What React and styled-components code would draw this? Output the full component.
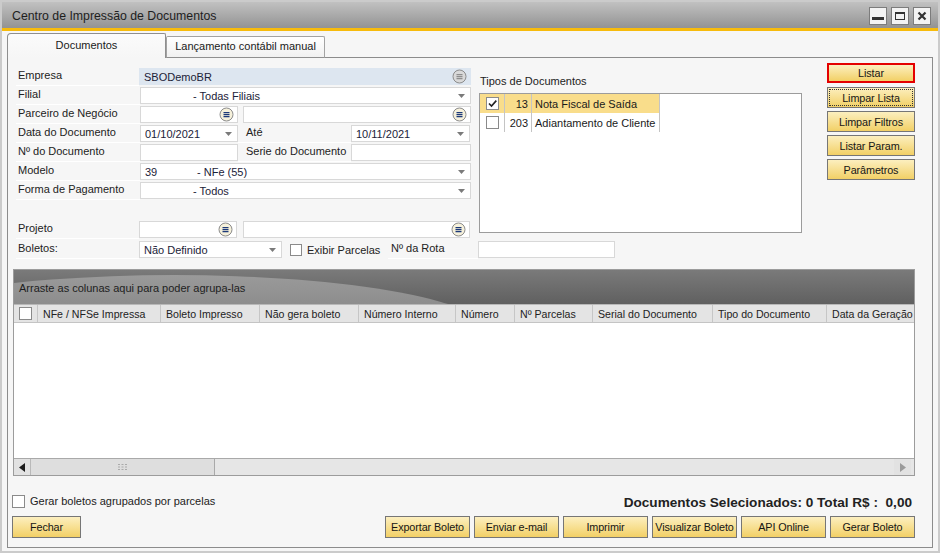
import React from 'react';
import styled, { createGlobalStyle } from 'styled-components';

const GlobalStyle = createGlobalStyle`
  html, body { margin: 0; padding: 0; background: #ffffff; }
  body { font-family: "Liberation Sans", Arial, sans-serif; font-size: 11px; color: #222; }
  * { box-sizing: border-box; }
`;

const Window = styled.div`
  width: 940px;
  height: 553px;
  border: 2px solid #cbcbcb;
  background: #f6f6f6;
  display: flex;
  flex-direction: column;
  overflow: hidden;
`;

const TitleBar = styled.div`
  height: 29px;
  flex-shrink: 0;
  display: flex;
  align-items: center;
  justify-content: space-between;
  padding: 0 7px 0 10px;
  background: linear-gradient(#c1c1c1, #939393);
  border-bottom: 3px solid #f7bb0c;
`;

const Title = styled.div`
  font-size: 12.3px;
  color: #1e1e1e;
  margin-top: 1px;
`;

const WinButtons = styled.div`
  display: flex;
  gap: 4px;
  margin-top: 1px;
`;

const WinButton = styled.div`
  width: 18px;
  height: 18px;
  border: 1px solid #7c7c7c;
  background: #f3f3f3;
  display: flex;
  align-items: center;
  justify-content: center;
`;

const Body = styled.div`
  flex: 1;
  display: flex;
  flex-direction: column;
  padding: 2px 5px 3px 5px;
`;

const TabRow = styled.div`
  height: 25px;
  margin-bottom: -1px;
  display: flex;
  align-items: flex-end;
  position: relative;
  z-index: 1;
`;

const Tab = styled.div`
  width: ${p => p.$w}px;
  height: ${p => (p.$active ? 25 : 22)}px;
  display: flex;
  align-items: center;
  justify-content: center;
  font-size: 11px;
  color: #1a1a1a;
  border: 1px solid ${p => (p.$active ? '#8f8f8f' : '#a3a3a3')};
  border-bottom: ${p => (p.$active ? 'none' : '1px solid #8f8f8f')};
  border-top-left-radius: ${p => (p.$active ? 4 : 2)}px;
  border-top-right-radius: 2px;
  background: ${p => (p.$active ? 'linear-gradient(#fbfbfb, #f6f6f6)' : 'linear-gradient(#ffffff, #f1f1f1)')};
  padding-bottom: ${p => (p.$active ? 3 : 2)}px;
`;

const Panel = styled.div`
  flex: 1;
  border: 1px solid #8c8c8c;
  background: #f6f6f6;
  padding: 5px 17px 0 4px;
  display: flex;
  flex-direction: column;
`;

const TopArea = styled.div`
  display: flex;
  margin-left: 4px;
`;

const FormCol = styled.div`
  width: 455px;
  padding-top: 4px;
  display: flex;
  flex-direction: column;
`;

const Row = styled.div`
  height: 19px;
  display: flex;
  align-items: flex-start;
`;

const Spacer = styled.div`
  height: ${p => p.$h}px;
`;

const Label = styled.div`
  width: ${p => p.$w}px;
  height: 19px;
  flex-shrink: 0;
  padding: 2px 0 0 ${p => p.$pl || 2}px;
  font-size: 11px;
  color: #222;
  white-space: nowrap;
  border-bottom: 1px solid #ffffff;
`;

const Field = styled.div`
  width: ${p => p.$w}px;
  height: 17px;
  margin-top: 1px;
  margin-left: ${p => p.$ml || 0}px;
  flex-shrink: 0;
  display: flex;
  align-items: center;
  padding: 0 3px 0 4px;
  background: ${p => (p.$locked ? '#dde6f0' : '#ffffff')};
  border: 1px solid ${p => (p.$locked ? '#dde6f0' : '#d8d8d8')};
  font-size: 11px;
  color: #1b2238;
`;

const FieldText = styled.span`
  flex: 1;
  white-space: nowrap;
  overflow: hidden;
`;

const Code = styled.span`
  display: inline-block;
  width: ${p => p.$w}px;
`;

const TypesCol = styled.div`
  width: 324px;
  margin-left: 8px;
  display: flex;
  flex-direction: column;
`;

const TypesLabel = styled.div`
  margin-top: 12px;
  height: 18px;
  font-size: 11px;
  color: #222;
  padding-left: 1px;
`;

const TypesBox = styled.div`
  height: 140px;
  border: 1px solid #9c9c9c;
  background: #ffffff;
`;

const TypeRow = styled.div`
  display: flex;
  width: 180px;
  height: 19px;
  background: ${p => (p.$selected ? '#f9dd8b' : 'transparent')};
`;

const TypeCell = styled.div`
  width: ${p => p.$w}px;
  height: 19px;
  display: flex;
  align-items: center;
  justify-content: ${p => p.$align || 'flex-start'};
  padding: 0 ${p => (p.$align === 'flex-end' ? 3 : 0)}px 0 ${p => (p.$align === 'center' ? 0 : 3)}px;
  border-right: 1px solid #c4c4c4;
  font-size: 11px;
  color: #1a1a1a;
`;

const ButtonsCol = styled.div`
  width: 88px;
  margin-left: 25px;
  display: flex;
  flex-direction: column;
  gap: 3px;
`;

const Button = styled.div`
  width: ${p => p.$w || 88}px;
  height: ${p => p.$h || 21}px;
  display: flex;
  align-items: center;
  justify-content: center;
  white-space: nowrap;
  font-size: 10.8px;
  letter-spacing: -0.1px;
  color: #151515;
  background: linear-gradient(#fcefbf, #f2d066);
  border: ${p => (p.$primary ? '2px solid #e40000' : '1px solid #767676')};
  outline: ${p => (p.$focus ? '1px dotted #333' : 'none')};
  outline-offset: -3px;
  margin-bottom: ${p => p.$mb || 0}px;
`;

const BoletoRow = styled.div`
  display: flex;
  align-items: flex-start;
  height: 19px;
  margin: 1px 0 0 4px;
`;

const CheckGroup = styled.div`
  width: 106px;
  height: 19px;
  display: flex;
  align-items: center;
  gap: 5px;
  padding-left: 8px;
  font-size: 11px;
  color: #222;
  white-space: nowrap;
`;

const Box = styled.div`
  width: ${p => p.$s || 13}px;
  height: ${p => p.$s || 13}px;
  flex-shrink: 0;
  border: 1px solid #8a8a8a;
  background: #ffffff;
  display: flex;
  align-items: center;
  justify-content: center;
`;

const Grid = styled.div`
  margin: 10px 0 0 1px;
  height: 207px;
  border: 1px solid #9c9c9c;
  display: flex;
  flex-direction: column;
  background: #ffffff;
`;

const GroupBar = styled.div`
  height: 34px;
  position: relative;
  overflow: hidden;
  background: linear-gradient(#7a7a7a, #606060);
  display: flex;
  align-items: flex-end;
  padding: 0 0 10px 5px;
  font-size: 11px;
  color: #1e1e1e;

  &::before {
    content: '';
    position: absolute;
    left: -160px;
    top: 5px;
    width: 640px;
    height: 120px;
    border-radius: 50%;
    background: linear-gradient(#9a9a9a, #858585 40%);
  }

  span { position: relative; }
`;

const HeaderRow = styled.div`
  height: 19px;
  display: flex;
  background: #e4e4e4;
  border-top: 1px solid #b8b8b8;
  border-bottom: 1px solid #c4c4c4;
  overflow: hidden;
`;

const HeaderCell = styled.div`
  width: ${p => p.$w}px;
  flex-shrink: 0;
  display: flex;
  align-items: center;
  justify-content: ${p => (p.$center ? 'center' : 'flex-start')};
  padding-left: ${p => (p.$center ? 0 : 5)}px;
  border-right: 1px solid #c6c6c6;
  font-size: 10.6px;
  color: #222;
  white-space: nowrap;
`;

const GridBody = styled.div`
  flex: 1;
`;

const ScrollBar = styled.div`
  height: 17px;
  display: flex;
  align-items: stretch;
  background: #e6e6e6;
  border-top: 1px solid #a9a9a9;
`;

const ScrollArrow = styled.div`
  width: 17px;
  display: flex;
  align-items: center;
  justify-content: center;
  background: #e2e2e2;
  border-right: ${p => (p.$left ? '1px solid #b9b9b9' : 'none')};
  margin-left: ${p => (p.$left ? 0 : 'auto')};
  margin-right: ${p => (p.$left ? 0 : 3)}px;
`;

const Thumb = styled.div`
  width: 184px;
  display: flex;
  align-items: center;
  justify-content: center;
  background: #dedede;
  border-right: 1px solid #a9a9a9;
`;

const InfoRow = styled.div`
  margin-top: 17px;
  height: 16px;
  display: flex;
  align-items: center;
  justify-content: space-between;
  padding-right: 3px;
`;

const CheckLabel = styled.div`
  display: flex;
  align-items: center;
  gap: 5px;
  font-size: 11px;
  color: #222;
`;

const Summary = styled.div`
  font-size: 13.6px;
  font-weight: bold;
  color: #222;
  margin-top: 2px;
`;

const ActionRow = styled.div`
  margin-top: 7px;
  display: flex;
  justify-content: space-between;
`;

const ActionGroup = styled.div`
  display: flex;
  gap: 4px;
`;

const Lookup = ({ disabled }) => (
  <svg width="15" height="15" viewBox="0 0 15 15">
    <circle cx="7.5" cy="7.5" r="6.5" fill={disabled ? '#d9d9d9' : '#f6f1db'} stroke="#8c8c8c" />
    <path d="M4.5 5.6h6M4.5 7.6h6M4.5 9.6h6" stroke={disabled ? '#8e8e8e' : '#1d3a78'} strokeWidth="1.2" />
  </svg>
);

const Arrow = () => (
  <svg width="7" height="4" viewBox="0 0 7 4" style={{ marginRight: 2 }}>
    <path d="M0 0h7L3.5 4z" fill="#7a7a7a" />
  </svg>
);

const Tick = () => (
  <svg width="11" height="11" viewBox="0 0 11 11">
    <path d="M2 5.5l2.5 2.6L9.3 2.6" fill="none" stroke="#222" strokeWidth="1.6" />
  </svg>
);

const headers = [
  ['NFe / NFSe Impressa', 123],
  ['Boleto Impresso', 99],
  ['Não gera boleto', 99],
  ['Número Interno', 97],
  ['Número', 59],
  ['Nº Parcelas', 78],
  ['Serial do Documento', 120],
  ['Tipo do Documento', 114],
  ['Data da Geração', 120],
];

const actions = ['Exportar Boleto', 'Enviar e-mail', 'Imprimir', 'Visualizar Boleto', 'API Online', 'Gerar Boleto'];

export default function App() {
  return (
    <>
      <GlobalStyle />
      <Window>
        <TitleBar>
          <Title>Centro de Impressão de Documentos</Title>
          <WinButtons>
            <WinButton>
              <svg width="12" height="12" viewBox="0 0 12 12"><rect x="0" y="7" width="12" height="3" fill="#333" /></svg>
            </WinButton>
            <WinButton>
              <svg width="12" height="12" viewBox="0 0 12 12">
                <rect x="1.5" y="2.5" width="9" height="7" fill="none" stroke="#333" strokeWidth="1" />
                <rect x="1" y="2" width="10" height="2" fill="#333" />
              </svg>
            </WinButton>
            <WinButton>
              <svg width="12" height="12" viewBox="0 0 12 12">
                <path d="M2.5 2.5l7 7M9.5 2.5l-7 7" stroke="#333" strokeWidth="2.2" />
              </svg>
            </WinButton>
          </WinButtons>
        </TitleBar>

        <Body>
          <TabRow>
            <Tab $active $w={159}>Documentos</Tab>
            <Tab $w={159}>Lançamento contábil manual</Tab>
          </TabRow>

          <Panel>
            <TopArea>
              <FormCol>
                <Row>
                  <Label $w={123}>Empresa</Label>
                  <Field $w={332} $locked>
                    <FieldText>SBODemoBR</FieldText>
                    <Lookup disabled />
                  </Field>
                </Row>
                <Row>
                  <Label $w={124}>Filial</Label>
                  <Field $w={331}>
                    <FieldText><Code $w={48} />- Todas Filiais</FieldText>
                    <Arrow />
                  </Field>
                </Row>
                <Row>
                  <Label $w={124}>Parceiro de Negócio</Label>
                  <Field $w={98}>
                    <FieldText />
                    <Lookup />
                  </Field>
                  <Field $w={228} $ml={5}>
                    <FieldText />
                    <Lookup />
                  </Field>
                </Row>
                <Row>
                  <Label $w={124}>Data do Documento</Label>
                  <Field $w={98}>
                    <FieldText>01/10/2021</FieldText>
                    <Arrow />
                  </Field>
                  <Label $w={113} $pl={8}>Até</Label>
                  <Field $w={119}>
                    <FieldText>10/11/2021</FieldText>
                    <Arrow />
                  </Field>
                </Row>
                <Row>
                  <Label $w={124}>Nº do Documento</Label>
                  <Field $w={98} />
                  <Label $w={113} $pl={8}>Serie do Documento</Label>
                  <Field $w={120} />
                </Row>
                <Row>
                  <Label $w={124}>Modelo</Label>
                  <Field $w={331}>
                    <FieldText><Code $w={52}>39</Code>- NFe (55)</FieldText>
                    <Arrow />
                  </Field>
                </Row>
                <Row>
                  <Label $w={124}>Forma de Pagamento</Label>
                  <Field $w={331}>
                    <FieldText><Code $w={48} />- Todos</FieldText>
                    <Arrow />
                  </Field>
                </Row>
                <Spacer $h={20} />
                <Row>
                  <Label $w={123}>Projeto</Label>
                  <Field $w={98}>
                    <FieldText />
                    <Lookup />
                  </Field>
                  <Field $w={227} $ml={6}>
                    <FieldText />
                    <Lookup />
                  </Field>
                </Row>
              </FormCol>

              <TypesCol>
                <TypesLabel>Tipos de Documentos</TypesLabel>
                <TypesBox>
                  <TypeRow $selected>
                    <TypeCell $w={25} $align="center"><Box $s={13}><Tick /></Box></TypeCell>
                    <TypeCell $w={27} $align="flex-end">13</TypeCell>
                    <TypeCell $w={128}>Nota Fiscal de Saída</TypeCell>
                  </TypeRow>
                  <TypeRow>
                    <TypeCell $w={25} $align="center"><Box $s={13} /></TypeCell>
                    <TypeCell $w={27} $align="flex-end">203</TypeCell>
                    <TypeCell $w={128}>Adiantamento de Cliente</TypeCell>
                  </TypeRow>
                </TypesBox>
              </TypesCol>

              <ButtonsCol>
                <Button $primary $h={20} $mb={1}>Listar</Button>
                <Button $focus>Limpar Lista</Button>
                <Button>Limpar Filtros</Button>
                <Button>Listar Param.</Button>
                <Button>Parâmetros</Button>
              </ButtonsCol>
            </TopArea>

            <BoletoRow>
              <Label $w={123}>Boletos:</Label>
              <Field $w={143}>
                <FieldText>Não Definido</FieldText>
                <Arrow />
              </Field>
              <CheckGroup>
                <Box $s={12} />
                Exibir Parcelas
              </CheckGroup>
              <Label $w={90} $pl={3}>Nº da Rota</Label>
              <Field $w={137} />
            </BoletoRow>

            <Grid>
              <GroupBar><span>Arraste as colunas aqui para poder agrupa-las</span></GroupBar>
              <HeaderRow>
                <HeaderCell $w={24} $center><Box $s={13} /></HeaderCell>
                {headers.map(([text, w]) => (
                  <HeaderCell key={text} $w={w}>{text}</HeaderCell>
                ))}
              </HeaderRow>
              <GridBody />
              <ScrollBar>
                <ScrollArrow $left>
                  <svg width="6" height="9" viewBox="0 0 6 9"><path d="M6 0v9L0 4.5z" fill="#1e1e1e" /></svg>
                </ScrollArrow>
                <Thumb>
                  <svg width="9" height="6" viewBox="0 0 9 6" fill="#aaaaaa">
                    <rect x="0" y="0" width="2" height="1" /><rect x="3.5" y="0" width="2" height="1" /><rect x="7" y="0" width="2" height="1" />
                    <rect x="0" y="2.5" width="2" height="1" /><rect x="3.5" y="2.5" width="2" height="1" /><rect x="7" y="2.5" width="2" height="1" />
                    <rect x="0" y="5" width="2" height="1" /><rect x="3.5" y="5" width="2" height="1" /><rect x="7" y="5" width="2" height="1" />
                  </svg>
                </Thumb>
                <ScrollArrow>
                  <svg width="6" height="9" viewBox="0 0 6 9"><path d="M0 0v9L6 4.5z" fill="#9a9a9a" /></svg>
                </ScrollArrow>
              </ScrollBar>
            </Grid>

            <InfoRow>
              <CheckLabel>
                <Box $s={13} />
                Gerar boletos agrupados por parcelas
              </CheckLabel>
              <Summary>Documentos Selecionados: 0 Total R$ :&nbsp; 0,00</Summary>
            </InfoRow>

            <ActionRow>
              <Button $w={69} $h={22}>Fechar</Button>
              <ActionGroup>
                {actions.map(a => (
                  <Button key={a} $w={85} $h={22}>{a}</Button>
                ))}
              </ActionGroup>
            </ActionRow>
          </Panel>
        </Body>
      </Window>
    </>
  );
}
